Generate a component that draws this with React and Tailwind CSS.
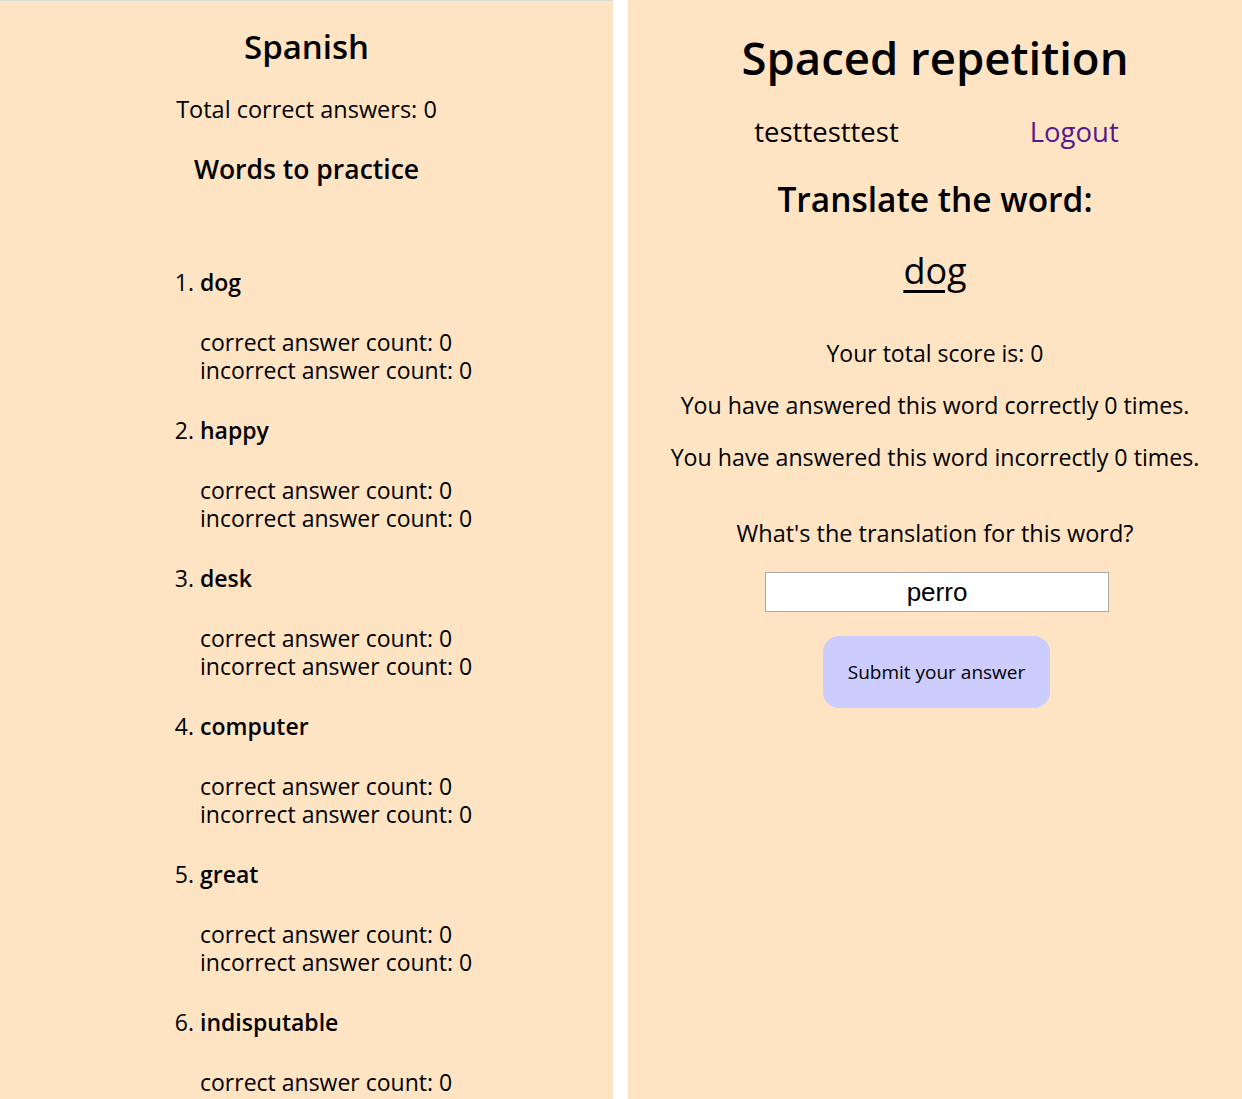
import React from "react";

const words = ["dog", "happy", "desk", "computer", "great", "indisputable"];

export default function App() {
  return (
    <div
      className="flex w-[1242px] h-[1099px] overflow-hidden bg-white text-black"
      style={{ fontFamily: '"Open Sans", "Noto Sans", sans-serif' }}
    >
      {/* Left panel */}
      <div className="w-[613px] h-full bg-[#ffe4c4] border-t border-[#d9dadb] flex flex-col shrink-0">
        <h1 className="mt-[27px] text-center text-[33px] leading-[38px] font-semibold">Spanish</h1>
        <p className="mt-[30px] text-center text-[23.5px] leading-[26px]">Total correct answers: 0</p>
        <h2 className="mt-[32px] text-center text-[26.5px] leading-[31px] font-semibold">Words to practice</h2>
        <ul className="mt-[83px] flex flex-col gap-[32px]">
          {words.map((w, i) => (
            <li key={w} className="flex flex-col gap-[32px]">
              <div className="flex text-[23px] leading-[28px]">
                <span className="w-[200px] pr-[6px] text-right">{i + 1}.</span>
                <span className="font-semibold">{w}</span>
              </div>
              <div className="pl-[200px] text-[23px] leading-[28px]">
                <div>correct answer count: 0</div>
                <div>incorrect answer count: 0</div>
              </div>
            </li>
          ))}
        </ul>
      </div>
      <div className="w-[15px] shrink-0 bg-white" />
      {/* Right panel */}
      <div className="flex-1 h-full bg-[#ffe4c4] flex flex-col items-center">
        <h1 className="mt-[28px] text-[45.5px] leading-[58px] font-semibold">Spaced repetition</h1>
        <div className="mt-[31px] ml-[3px] flex items-center gap-[131px] text-[27.5px] leading-[30px]">
          <span>testtesttest</span>
          <a href="#" className="text-[#551a8b]">Logout</a>
        </div>
        <h2 className="mt-[32px] text-[33.5px] leading-[40px] font-semibold">Translate the word:</h2>
        <div className="mt-[30px] text-[36px] leading-[44px] underline underline-offset-[6px]">dog</div>
        <p className="mt-[47px] text-[23px] leading-[26px]">Your total score is: 0</p>
        <p className="mt-[26px] text-[23.2px] leading-[26px]">You have answered this word correctly 0 times.</p>
        <p className="mt-[26px] text-[23.2px] leading-[26px]">You have answered this word incorrectly 0 times.</p>
        <p className="mt-[50px] text-[23.5px] leading-[26px]">What's the translation for this word?</p>
        <input
          readOnly
          value="perro"
          className="mt-[26px] ml-[4px] w-[344px] h-[40px] bg-white border border-[#a9a9a9] text-center text-[26px] outline-none"
          style={{ fontFamily: '"Liberation Sans", Arial, sans-serif' }}
        />
        <button className="mt-[24px] ml-[3px] w-[227px] h-[72px] rounded-[16px] bg-[#ccccff] text-[19px]">
          Submit your answer
        </button>
      </div>
    </div>
  );
}
